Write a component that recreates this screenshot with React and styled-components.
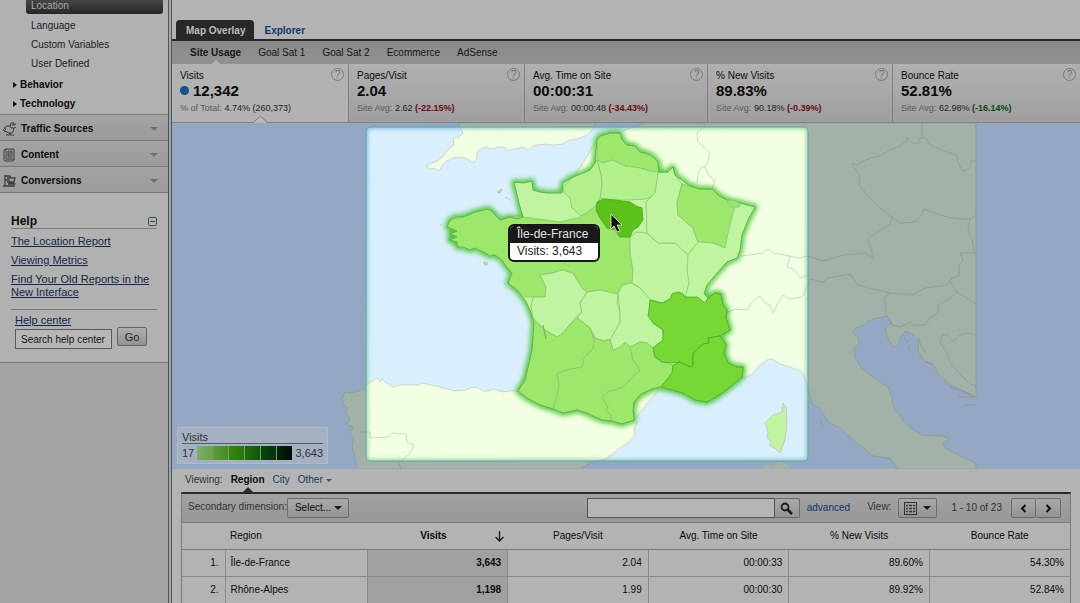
import React from "react";
import styled, { createGlobalStyle } from "styled-components";

const GlobalStyle = createGlobalStyle`
  *, *::before, *::after { box-sizing: border-box; }
  html, body { margin: 0; background: #b3b3b3; }
  body {
    font-family: "Liberation Sans", Arial, Helvetica, sans-serif;
    font-size: 10px;
    line-height: 12px;
    color: #0c0c0c;
  }
  button, input, select { font: inherit; color: inherit; margin: 0; }
`;

/* ---------- Frame ---------- */

const Page = styled.div`
  display: flex;
  min-height: 100vh;
`;

const Sidebar = styled.aside`
  flex: none;
  width: 172px;
  background: #a4a4a4;
  border-right: 4px double #4f5454;
`;

const Main = styled.main`
  flex: 1;
  min-width: 0;
  background: #b3b3b3;
`;

/* ---------- Sidebar ---------- */

const SubNav = styled.nav`
  background: #b1b1b1;
  padding-bottom: 1px;
`;

const ActiveItem = styled.a`
  display: block;
  height: 14px;
  margin: 0 5px 2px 26px;
  padding: 0 5px;
  border-radius: 0 0 3px 3px;
  background: linear-gradient(#474747, #262626);
  color: #a9a9a9;
  text-decoration: none;
`;

const SubItem = styled.a`
  display: block;
  height: 19px;
  padding: 4px 0 0 31px;
  color: #1c1c1c;
  text-decoration: none;
`;

const Groups = styled.div`
  padding-top: 2px;
`;

const GroupItem = styled.button`
  display: flex;
  align-items: center;
  gap: 3px;
  width: 100%;
  height: 19px;
  padding: 1px 0 0 13px;
  border: 0;
  background: none;
  font-weight: bold;
`;

const RightArrow = styled.span`
  border: 3px solid transparent;
  border-left: 4px solid #111;
  border-right: 0;
`;

const Section = styled.button`
  display: flex;
  align-items: center;
  width: 100%;
  height: 26px;
  padding: 2px 10px 0 3px;
  border: 0;
  border-top: 1px solid #7c7c7c;
  background: linear-gradient(#a4a4a4, #9b9b9b);
  font-weight: bold;
  text-align: left;
  svg { flex: none; margin-right: 4px; }
`;

const SectionName = styled.span`
  flex: 1;
`;

const Caret = styled.span`
  display: inline-block;
  border: ${(p) => p.$size || 4}px solid transparent;
  border-top-color: ${(p) => p.$color || "#6f6f6f"};
  border-bottom: 0;
`;

const HelpPanel = styled.section`
  padding: 21px 11px 13px;
  border-top: 1px solid #7c7c7c;
  border-bottom: 1px solid #787878;
  background: #b1b1b1;
`;

const HelpHead = styled.div`
  display: flex;
  align-items: center;
  justify-content: space-between;
  border-bottom: 1px solid #7d7d7d;
`;

const HelpTitle = styled.h2`
  margin: 0;
  font-size: 12px;
  line-height: 14px;
`;

const Collapse = styled.button`
  display: flex;
  padding: 0;
  border: 0;
  background: none;
`;

const HelpLinks = styled.div`
  display: flex;
  flex-direction: column;
  align-items: flex-start;
  gap: 6px;
  padding: 6px 0 10px;
  border-bottom: 1px solid #7d7d7d;
`;

const HelpLink = styled.a`
  color: #13284a;
  font-size: 11px;
  line-height: 13px;
  text-decoration: underline;
`;

const HelpSearch = styled.form`
  padding: 4px 4px 0;
`;

const HelpRow = styled.div`
  display: flex;
  align-items: flex-start;
  gap: 5px;
`;

const HelpInput = styled.input`
  width: 97px;
  height: 20px;
  margin-top: 2px;
  padding: 0 5px;
  border: 1px solid #5a5a5a;
  background: #b7b7b7;
  &::placeholder { color: #151515; opacity: 1; }
`;

const GoButton = styled.button`
  width: 30px;
  height: 19px;
  padding: 0;
  border: 1px solid #646464;
  border-radius: 2px;
  background: linear-gradient(#aeaeae, #929292);
  font-size: 11px;
  color: #222;
`;

/* ---------- Report header ---------- */

const Tabs = styled.nav`
  display: flex;
  padding: 20px 4px 0;
  border-bottom: 2px solid #282828;
`;

const Tab = styled.a`
  height: 19px;
  padding: 5px 9px 0 10px;
  border-radius: 4px 4px 0 0;
  background: ${(p) => (p.$active ? "#282828" : "transparent")};
  color: ${(p) => (p.$active ? "#bcbcbc" : "#10396b")};
  font-weight: bold;
  text-decoration: none;
`;

const SubTabs = styled.nav`
  display: flex;
  gap: 17px;
  height: 23px;
  padding: 6px 18px 0;
  background: linear-gradient(#8a8a8a, #919191);
`;

const SubTab = styled.a`
  position: relative;
  color: #161616;
  font-weight: ${(p) => (p.$active ? "bold" : "normal")};
  text-decoration: none;
  &::after {
    content: "";
    display: ${(p) => (p.$active ? "block" : "none")};
    position: absolute;
    bottom: 0;
    left: 50%;
    margin-left: -4px;
    border: 4px solid transparent;
    border-top: 0;
    border-bottom-color: #b3b3b3;
  }
`;

const Metrics = styled.section`
  display: grid;
  grid-template-columns: 176fr 176fr 183fr 185fr 188fr;
  height: 59px;
  border-bottom: 1px solid #858585;
`;

const Metric = styled.article`
  position: relative;
  padding: 6px 8px 0;
  border-left: 1px solid #7f7f7f;
  background: ${(p) => (p.$selected ? "#b2b2b2" : "linear-gradient(#b0b0b0, #9f9f9f)")};
  &:first-child { border-left: 0; }
`;

const MetricHead = styled.div`
  display: flex;
  justify-content: space-between;
  height: 12px;
`;

const HelpBadge = styled.button`
  width: 13px;
  height: 13px;
  margin: -2px -4px 0 0;
  padding: 0;
  border: 1px solid #7b7b7b;
  border-radius: 50%;
  background: none;
  color: #707070;
  line-height: 11px;
`;

const MetricValue = styled.div`
  display: flex;
  align-items: center;
  gap: 4px;
  font-size: 15px;
  line-height: 17px;
  font-weight: bold;
`;

const Dot = styled.span`
  width: 9px;
  height: 9px;
  border-radius: 50%;
  background: #0c558f;
`;

const MetricNote = styled.div`
  margin-top: 3px;
  font-size: 9px;
  line-height: 12px;
  color: #5c5c5c;
`;

const NoteValue = styled.span`
  color: #1e1e1e;
`;

const Change = styled.b`
  color: ${(p) => (p.$good ? "#0d4a12" : "#6c0b14")};
`;

const Notch = styled.svg`
  position: absolute;
  left: 50%;
  bottom: -1px;
  margin-left: -7px;
`;

/* ---------- Map ---------- */

const MapArea = styled.section`
  position: relative;
  height: 346px;
  background: #94a8c3;
`;

const MapSvg = styled.svg`
  display: block;
  width: 100%;
  height: 100%;
`;

const Tooltip = styled.div`
  position: absolute;
  left: 336px;
  top: 101px;
  width: 92px;
  border: 2px solid #171717;
  border-radius: 6px;
  background: #fff;
  overflow: hidden;
  color: #1b1b1b;
  font-size: 12px;
  line-height: 17px;
`;

const TooltipTitle = styled.div`
  padding: 0 7px;
  background: #191919;
  color: #e2e2e2;
`;

const TooltipBody = styled.div`
  padding: 0 7px;
`;

const Legend = styled.div`
  position: absolute;
  left: 5px;
  bottom: 5px;
  width: 151px;
  padding: 3px 4px 1px;
  border: 1px solid #b1bac8;
  background: #a5b0c2;
  color: #333;
  font-size: 11px;
`;

const LegendTitle = styled.div`
  border-bottom: 1px solid #555c66;
`;

const LegendScale = styled.div`
  display: flex;
  align-items: center;
  justify-content: space-between;
  height: 18px;
`;

const Swatches = styled.div`
  display: flex;
  gap: 1px;
  background: #7c9c70;
`;

const Swatch = styled.span`
  width: 15px;
  height: 14px;
  background: linear-gradient(90deg, ${(p) => p.$from}, ${(p) => p.$to});
`;

const OUTSIDE = {
  sea: "#94a8c3", land: "#a3b2a8", line: "#8c9a93", light: "#a3b2a8",
};
const INSIDE = {
  sea: "#daeffe", land: "#f3ffe2", line: "#c3cdb9",
  light: "#c0f4a0", soft: "#b2f08b", mid: "#9de86c", strong: "#76d735", top: "#5cc21a",
};

const MAINLAND =
  "M645 123L633 127L620 132L597 140L560 200L500 222L530 300L533 335L530 363L518 391L510 391L503 392L497 390L493 389L488 391L483 391L480 389L475 387L470 388L465 390L455 391L440 387L422 383L419 385L400 385L393 387L385 382L382 379L380 381L377 378L373 381L368 383L362 390L352 393L345 392L342 399L344 405L348 408L345 414L350 418L347 425L353 427L350 434L354 438L352 446L355 457L357 469L580 469L592 462L606 459L620 448L628 443L635 435L634 428L637 423L634 420L660 388L742 378L747 377L753 373L760 365L767 360L772 359L780 364L790 367L798 370L803 373L808 387L812 404L820 408L828 422L840 428L853 440L864 448L873 456L890 458L898 469H976V463L960 456L945 448L943 443L950 439L942 436L922 435L912 429L903 420L895 410L893 405L892 397L888 387L870 375L861 368L855 357L854 348L859 343L858 337L853 333L855 328L862 326L867 322L873 319L879 318L886 316L889 319L892 323L885 327L887 335L889 341L894 347L898 345L901 336L906 331L914 335L919 342L918 351L922 358L930 364L935 370L943 378L950 385L962 390L976 397V123Z";
const ENGLAND =
  "M458 123L460 128L463 133L458 138L453 138L454 145L447 151L443 156L438 161L432 163L426 166L430 169L434 168L439 171L442 166L447 161L453 158L460 157L467 159L470 161L474 163L477 158L477 152L481 149L485 147L493 149L499 147L504 147L508 151L514 149L523 147L528 150L533 146L537 145L547 144L553 145L563 144L567 141L577 139L587 135L593 129L596 123Z";
const FRANCE =
  "M597 140L600 136L610 133L620 133L622 140L627 145L635 146L640 152L646 153L652 156L658 162L659 172L668 172L673 167L675 175L682 180L690 186L700 189L712 189L718 195L727 200L740 203L755 207L748 220L742 235L740 250L737 258L727 262L718 272L707 285L704 294L708 298L715 293L721 294L723 305L727 310L726 318L730 330L720 336L726 345L724 353L728 363L737 367L743 367L742 377L730 387L718 396L707 402L695 400L683 393L672 390L660 387L652 389L640 395L634 402L633 410L634 420L622 424L612 421L602 420L595 417L587 413L577 410L563 413L553 409L540 405L527 398L518 391L525 380L529 363L532 350L533 337L534 322L530 310L525 300L517 290L508 283L512 273L505 265L502 260L495 255L490 256L485 253L475 248L470 250L463 247L457 247L457 242L449 240L457 237L450 234L457 231L447 227L450 220L456 217L463 217L475 212L488 209L492 211L495 215L500 220L510 217L517 219L523 217L520 207L517 195L514 182L523 183L532 181L533 190L540 192L547 193L562 193L563 183L573 177L590 170L595 163Z";

const REGIONS = [
  ["mid", "M597 140L600 136L610 133L620 133L622 140L627 145L635 146L640 152L652 156L658 162L659 172L650 171L640 168L625 166L612 160L603 163L597 160Z"],
  ["soft", "M597 160L603 163L612 160L625 166L640 168L650 171L659 172L658 185L655 195L646 199L628 200L615 200L600 198L602 185L601 175Z"],
  ["soft", "M563 187L573 177L590 170L597 160L601 175L602 185L600 198L596 206L589 211L581 216L572 208L570 198L564 193Z"],
  ["mid", "M523 217L510 217L500 220L492 211L488 209L475 212L463 217L450 220L447 227L457 231L450 234L457 237L449 240L457 242L457 247L470 250L475 248L485 253L495 255L505 265L512 273L508 283L517 290L525 297L545 297L546 287L540 275L553 273L562 270L573 273L582 288L587 292L600 290L618 295L622 285L632 283L633 270L630 253L630 237L620 237L600 218L597 205L589 211L581 217L560 222Z"],
  ["light", "M533 297L545 297L546 287L540 275L553 273L562 270L573 273L582 288L587 292L580 303L582 312L575 318L567 328L563 333L557 337L545 330L533 318L531 306Z"],
  ["light", "M587 292L600 290L618 294L617 303L620 312L620 322L613 338L604 341L595 338L590 328L577 318L582 312L580 303Z"],
  ["light", "M618 294L622 285L632 283L640 288L651 296L649 310L653 323L663 330L663 340L653 348L647 343L640 342L630 347L625 342L620 347L617 351L613 350L610 340L620 322L620 312Z"],
  ["light", "M630 237L637 232L647 233L658 243L675 243L688 255L687 270L689 283L685 297L678 292L670 299L662 303L651 300L640 288L632 283L633 270L630 253Z"],
  ["light", "M658 173L668 172L673 167L675 175L682 184L677 203L678 215L693 228L698 242L688 255L675 243L658 243L647 233L646 202L655 193Z"],
  ["mid", "M682 184L690 186L700 189L712 189L718 195L727 200L729 207L735 206L732 217L728 233L725 248L713 243L698 242L693 228L678 215L677 203Z"],
  ["mid", "M577 318L590 328L595 338L604 341L610 340L613 350L620 347L625 342L630 347L633 360L640 370L632 378L622 388L607 392L602 397L608 407L606 411L611 415L611 421L602 420L595 417L577 410L563 413L553 409L559 387L557 373L570 369L582 367L584 358L593 348L594 340Z"],
  ["mid", "M533 320L545 330L557 337L563 333L567 328L577 318L590 328L594 340L593 348L584 358L582 367L570 369L557 373L559 387L553 409L540 405L527 398L518 391L525 380L529 363L532 350Z"],
  ["mid", "M630 347L640 342L647 343L653 348L655 357L662 362L673 365L672 373L661 387L652 389L640 395L634 402L634 420L622 424L611 421L611 415L606 411L608 407L602 397L607 392L622 388L632 378L640 370L633 360Z"],
  ["strong", "M650 300L662 303L670 299L672 294L678 292L683 294L685 297L697 297L705 303L708 298L715 293L721 294L723 305L727 310L726 318L730 330L720 336L708 338L709 343L703 344L693 353L693 365L690 367L680 362L671 363L662 362L655 357L653 348L663 340L663 330L653 323L648 316L649 310Z"],
  ["strong", "M720 336L708 338L709 343L703 344L693 353L693 365L690 367L680 362L673 365L672 373L661 387L672 390L683 393L695 400L707 402L718 396L730 387L742 377L743 367L737 367L728 363L724 353L726 345Z"],
  ["top", "M597 202L603 199L615 200L630 202L636 206L642 208L643 220L638 227L633 230L630 237L620 237L615 230L607 228L600 218L596 210Z"],
];

const BORDERS = [
  "M705 123V127L697 132L698 142L704 147L710 153L708 161L705 167L709 176L715 180L712 189",
  "M697 183L698 173L702 167L705 167",
  "M740 256L750 255L763 253L768 249L773 253L790 256L787 267L795 270L800 278L808 275",
  "M790 256L798 258L808 256L823 261L843 255L865 253L874 259L872 252L868 238L880 231L890 224L892 217L900 223L915 222L922 214L924 209L935 213L947 217L960 219L970 219L976 215",
  "M728 312L735 309L747 310L753 301L760 296L765 303L770 305L773 313L778 303L783 295L790 299L802 297L808 285L810 279L823 282L828 278L850 274L858 285L872 289L890 293L912 295L925 288L947 285L952 278L959 276L959 264L963 260L960 253L976 253",
  "M892 217L880 208L867 195L859 184L860 177L852 164L857 165L870 158L880 156L890 150L898 147L906 142L907 137L911 142L917 144L920 138L926 138L930 145L943 151L954 154L957 157L958 163L963 171L970 168L971 161L976 161",
  "M922 123L922 138",
  "M970 219L968 230L973 243L974 253",
  "M890 293L883 298L886 304L885 312L890 321L892 325L900 327L910 322L913 325L925 325L930 318L938 313L938 305L948 300L957 292L950 282",
  "M957 292L967 298L976 304",
  "M976 335L967 333L958 336L953 341L948 335L942 335L940 342L947 353L950 362L958 372L967 381L976 387",
  "M360 432L370 432L370 438L388 437L392 433L406 434L407 442L414 445L410 453L399 463L401 469",
];

function MapShapes({ tone }) {
  return (
    <g strokeLinejoin="round">
      <rect x="172" y="123" width="908" height="346" fill={tone.sea} />
      <path d={MAINLAND} fill={tone.land} stroke={tone.line} strokeWidth="0.8" />
      <path d={ENGLAND} fill={tone.land} stroke={tone.line} strokeWidth="0.8" />
      <path d="M762 469L766 465L773 466L779 461L786 464L791 469Z" fill={tone.land} />
      <g fill="none" stroke={tone.line} strokeWidth="0.8">
        {BORDERS.map((d) => <path key={d} d={d} />)}
      </g>
      <path
        d="M783 403L786 407L787 423L785 440L780 453L775 448L770 446L771 442L767 437L768 432L765 423L773 415L782 412Z"
        fill={tone.light} stroke={tone.line}
      />
    </g>
  );
}

function FranceMap() {
  return (
    <MapSvg viewBox="172 123 908 346" preserveAspectRatio="xMinYMin slice" role="img" aria-label="Visits by region in France">
      <defs>
        <clipPath id="focus"><rect x="366" y="127" width="442" height="334" rx="4" /></clipPath>
        <linearGradient id="rim" x1="0" x2="1" y1="0" y2="1">
          <stop offset="0" stopColor="#5f9fdc" />
          <stop offset="0.4" stopColor="#67cb83" />
          <stop offset="1" stopColor="#62bda0" />
        </linearGradient>
        <filter id="glow" x="-10%" y="-10%" width="120%" height="120%"><feGaussianBlur stdDeviation="2.5" /></filter>
        <filter id="rimGlow" x="-10%" y="-10%" width="120%" height="120%"><feGaussianBlur stdDeviation="2" /></filter>
      </defs>
      <MapShapes tone={OUTSIDE} />
      <path d="M904 337L906 342L911 339M908 346L911 351M918 337L921 346L926 353M925 362L933 364L937 370M958 397H975M963 405H975M950 387L964 392L974 397M820 420L823 426M858 374L859 375" fill="none" stroke="#8c9a93" />
      <g clipPath="url(#focus)">
        <MapShapes tone={INSIDE} />
        <path d={FRANCE} fill="none" stroke="#3fc22f" strokeWidth="5" strokeLinejoin="round" filter="url(#glow)" />
        <path d={FRANCE} fill={INSIDE.light} />
        {REGIONS.map(([tone, d]) => (
          <path key={d} d={d} fill={INSIDE[tone]} stroke={tone === "strong" || tone === "top" ? "#48a81b" : "#86c76b"} strokeWidth="0.8" strokeLinejoin="round" />
        ))}
        <path d={FRANCE} fill="none" stroke="#5cb83f" strokeWidth="1" strokeLinejoin="round" />
        <path d="M543 325L546 339" fill="none" stroke="#5cb83f" />
        <path d="M727 200L735 201L741 204L739 207L732 207Z" fill={INSIDE.mid} stroke="#86c76b" strokeWidth="0.8" />
        <path d="M484 262L488 263L487 265L484 264ZM504 283L506 285M440 225H442M497 192L502 189L500 193ZM505 197L511 200" fill="#b9e59f" stroke="#9cc795" strokeWidth="0.8" />
        <rect x="365" y="126" width="444" height="336" rx="5" fill="none" stroke="url(#rim)" strokeWidth="5" opacity="0.8" filter="url(#rimGlow)" />
      </g>
      <rect x="366" y="127" width="442" height="334" rx="4" fill="none" stroke="#62a2b2" strokeWidth="1" />
      <path d="M611 214V229L614 226L617 232L620 231L617 225H622Z" fill="#111" stroke="#e7f5dd" strokeWidth="0.8" />
    </MapSvg>
  );
}

/* ---------- Data table ---------- */

const Viewing = styled.nav`
  display: flex;
  gap: 8px;
  height: 23px;
  padding: 5px 13px 0;
  color: #333;
`;

const ViewLink = styled.a`
  position: relative;
  color: ${(p) => (p.$active ? "#0c0c0c" : "#163c68")};
  font-weight: ${(p) => (p.$active ? "bold" : "normal")};
  text-decoration: none;
  ${Caret} { vertical-align: middle; }
  &::after {
    content: "";
    display: ${(p) => (p.$active ? "block" : "none")};
    position: absolute;
    bottom: 0;
    left: 50%;
    margin-left: -5px;
    border: 5px solid transparent;
    border-top: 0;
    border-bottom-color: #2a2a2a;
  }
`;

const Report = styled.section`
  margin: 0 9px;
  border: 1px solid #7b7b7b;
  border-top: 2px solid #2a2a2a;
  border-bottom: 0;
`;

const Toolbar = styled.div`
  display: flex;
  align-items: center;
  height: 28px;
  padding: 0 9px 0 6px;
  background: linear-gradient(#a3a3a3, #979797);
`;

const ToolLabel = styled.label`
  color: #333;
  line-height: 14px;
  padding-bottom: 2px;
`;

const SelectBox = styled.span`
  display: flex;
  align-items: center;
  position: relative;
  ${Caret} { position: absolute; right: 7px; pointer-events: none; }
`;

const Select = styled.select`
  appearance: none;
  width: 62px;
  height: 20px;
  padding: 0 7px;
  border: 1px solid #6c6c6c;
  border-radius: 2px;
  background: linear-gradient(#a9a9a9, #939393);
`;

const SearchBox = styled.form`
  display: flex;
  margin-left: auto;
`;

const SearchInput = styled.input`
  width: 188px;
  height: 20px;
  border: 1px solid #555;
  background: #b5b5b5;
`;

const ToolButton = styled.button`
  display: flex;
  align-items: center;
  justify-content: center;
  gap: 6px;
  width: ${(p) => p.$width}px;
  height: 20px;
  padding: 0;
  border: 1px solid #6c6c6c;
  border-left-width: ${(p) => (p.$joined ? 0 : 1)}px;
  border-radius: 2px;
  background: linear-gradient(#a9a9a9, #939393);
`;

const Advanced = styled.a`
  margin: 0 17px 0 7px;
  color: #0f3768;
  text-decoration: none;
`;

const ViewTools = styled.div`
  display: flex;
  align-items: center;
  gap: 7px;
`;

const Pager = styled.div`
  display: flex;
  align-items: center;
  margin-left: 14px;
  color: #303030;
`;

const PagerButtons = styled.div`
  display: flex;
  margin-left: 9px;
`;

const Table = styled.table`
  width: 100%;
  table-layout: fixed;
  border-collapse: collapse;
`;

const Col = styled.col`
  width: ${(p) => p.$width};
`;

const Th = styled.th`
  position: relative;
  height: 27px;
  padding: ${(p) => (p.$left ? "0 5px" : "0")};
  border-top: 1px solid #7b7b7b;
  border-bottom: 1px solid #7b7b7b;
  text-align: ${(p) => (p.$left ? "left" : "center")};
  font-weight: ${(p) => (p.$sorted ? "bold" : "normal")};
`;

const SortHead = styled.span`
  display: flex;
  align-items: center;
  justify-content: flex-end;
  gap: 47px;
  padding-right: 3px;
`;

const Td = styled.td`
  height: 27px;
  padding: 0 6px 0 5px;
  border-bottom: 1px solid #8a8a8a;
  border-left: 1px solid #8a8a8a;
  background: ${(p) => (p.$sorted ? "#a0a0a0" : "transparent")};
  font-weight: ${(p) => (p.$sorted ? "bold" : "normal")};
  text-align: ${(p) => (p.$left ? "left" : "right")};
  &:first-child { border-left: 0; }
`;

const ROWS = [
  ["1.", "Île-de-France", "3,643", "2.04", "00:00:33", "89.60%", "54.30%"],
  ["2.", "Rhône-Alpes", "1,198", "1.99", "00:00:30", "89.92%", "52.84%"],
];

const METRICS = [
  { name: "Visits", value: "12,342", label: "% of Total:", base: "4.74% (260,373)", selected: true },
  { name: "Pages/Visit", value: "2.04", label: "Site Avg:", base: "2.62", change: "(-22.15%)" },
  { name: "Avg. Time on Site", value: "00:00:31", label: "Site Avg:", base: "00:00:48", change: "(-34.43%)" },
  { name: "% New Visits", value: "89.83%", label: "Site Avg:", base: "90.18%", change: "(-0.39%)" },
  { name: "Bounce Rate", value: "52.81%", label: "Site Avg:", base: "62.98%", change: "(-16.14%)", good: true },
];

const SCALE = [
  ["#7fae6d", "#69a24e"], ["#5c9c3a", "#438f1f"], ["#37870f", "#247808"],
  ["#216d0b", "#11570b"], ["#08480c", "#04320b"], ["#052409", "#030c05"],
];

const line = { fill: "none", stroke: "#3f3f3f", strokeWidth: 1, strokeLinejoin: "round" };

const TrafficIcon = () => (
  <svg width="14" height="14" viewBox="0 0 14 14" {...line}>
    <path d="M1 6L4 4L7 4L8 6L11 6L10 10L7 12L4 10L1 9L3 7ZM7 4L8 1L11 1L9 4M10 3L13 2M11 6L13 5M1 9L0 7M3 13H11M7 10V13" />
  </svg>
);

const ContentIcon = () => (
  <svg width="14" height="14" viewBox="0 0 14 14" {...line}>
    <path d="M1 2L3 1H11V12L10 13H2L1 12ZM3 1V11H11M5 3H9V9H5ZM5 5H9M5 7H8" />
  </svg>
);

const FlagIcon = () => (
  <svg width="14" height="14" viewBox="0 0 14 14" {...line}>
    <path d="M2 1V12M0 12H7M2 2H7L8 4H12L11 8H7L6 6H2M4 4H12M4 8L12 10H5M6 12H12" strokeWidth="1.3" />
  </svg>
);

export default function App() {
  return (
    <>
      <GlobalStyle />
      <Page>
        <Sidebar>
          <SubNav aria-label="Visitors">
            <ActiveItem href="#location">Location</ActiveItem>
            <SubItem href="#language">Language</SubItem>
            <SubItem href="#variables">Custom Variables</SubItem>
            <SubItem href="#user">User Defined</SubItem>
            <Groups>
              <GroupItem><RightArrow />Behavior</GroupItem>
              <GroupItem><RightArrow />Technology</GroupItem>
            </Groups>
          </SubNav>
          <Section><TrafficIcon /><SectionName>Traffic Sources</SectionName><Caret /></Section>
          <Section><ContentIcon /><SectionName>Content</SectionName><Caret /></Section>
          <Section><FlagIcon /><SectionName>Conversions</SectionName><Caret /></Section>
          <HelpPanel>
            <HelpHead>
              <HelpTitle>Help</HelpTitle>
              <Collapse aria-label="Collapse help">
                <svg width="9" height="9" viewBox="0 0 9 9" fill="none" stroke="#35504c">
                  <rect x="0.5" y="0.5" width="8" height="8" rx="1" /><path d="M2 4.5H7" />
                </svg>
              </Collapse>
            </HelpHead>
            <HelpLinks>
              <HelpLink href="#report">The Location Report</HelpLink>
              <HelpLink href="#metrics">Viewing Metrics</HelpLink>
              <HelpLink href="#old">Find Your Old Reports in the New Interface</HelpLink>
            </HelpLinks>
            <HelpSearch>
              <HelpLink href="#help">Help center</HelpLink>
              <HelpRow>
                <HelpInput aria-label="Search help center" placeholder="Search help center" />
                <GoButton type="button">Go</GoButton>
              </HelpRow>
            </HelpSearch>
          </HelpPanel>
        </Sidebar>

        <Main>
          <Tabs>
            <Tab href="#map" $active>Map Overlay</Tab>
            <Tab href="#explorer">Explorer</Tab>
          </Tabs>
          <SubTabs>
            <SubTab href="#usage" $active>Site Usage</SubTab>
            <SubTab href="#goal1">Goal Sat 1</SubTab>
            <SubTab href="#goal2">Goal Sat 2</SubTab>
            <SubTab href="#ecommerce">Ecommerce</SubTab>
            <SubTab href="#adsense">AdSense</SubTab>
          </SubTabs>
          <Metrics>
            {METRICS.map((m) => (
              <Metric key={m.name} $selected={m.selected}>
                <MetricHead>{m.name}<HelpBadge aria-label={`About ${m.name}`}>?</HelpBadge></MetricHead>
                <MetricValue>{m.selected && <Dot />}{m.value}</MetricValue>
                <MetricNote>
                  {m.label} <NoteValue>{m.base}</NoteValue> {m.change && <Change $good={m.good}>{m.change}</Change>}
                </MetricNote>
                {m.selected && (
                  <Notch width="15" height="8" viewBox="0 0 15 8">
                    <path d="M0 8L7.5 1L15 8" fill="#b8b8b8" stroke="#777" />
                  </Notch>
                )}
              </Metric>
            ))}
          </Metrics>

          <MapArea>
            <FranceMap />
            <Tooltip role="tooltip">
              <TooltipTitle>Île-de-France</TooltipTitle>
              <TooltipBody>Visits: 3,643</TooltipBody>
            </Tooltip>
            <Legend>
              <LegendTitle>Visits</LegendTitle>
              <LegendScale>
                17
                <Swatches>{SCALE.map(([from, to]) => <Swatch key={from} $from={from} $to={to} />)}</Swatches>
                3,643
              </LegendScale>
            </Legend>
          </MapArea>

          <Viewing>
            Viewing:
            <ViewLink href="#region" $active>Region</ViewLink>
            <ViewLink href="#city">City</ViewLink>
            <ViewLink href="#other">Other <Caret $size={3} $color="#555" /></ViewLink>
          </Viewing>

          <Report>
            <Toolbar>
              <ToolLabel htmlFor="dimension">Secondary dimension:</ToolLabel>
              <SelectBox>
                <Select id="dimension"><option>Select...</option></Select>
                <Caret $color="#1c1c1c" />
              </SelectBox>
              <SearchBox>
                <SearchInput aria-label="Search the table" />
                <ToolButton type="button" aria-label="Search" $width={25} $joined>
                  <svg width="13" height="13" viewBox="0 0 13 13" fill="none" stroke="#1b1b1b">
                    <circle cx="5" cy="5" r="3.5" strokeWidth="1.8" /><path d="M7.5 7.5L12 12" strokeWidth="2.5" />
                  </svg>
                </ToolButton>
              </SearchBox>
              <Advanced href="#advanced">advanced</Advanced>
              <ViewTools>
                <ToolLabel as="span">View:</ToolLabel>
                <ToolButton aria-label="View as table" $width={39}>
                  <svg width="13" height="13" viewBox="0 0 13 13" fill="none" stroke="#333">
                    <rect x="0.5" y="0.5" width="12" height="12" />
                    <path d="M2 3.5H4M5 3.5H8M9 3.5H11M2 6.5H4M5 6.5H8M9 6.5H11M2 9.5H4M5 9.5H8M9 9.5H11" strokeWidth="1.6" />
                  </svg>
                  <Caret $size={4} $color="#1c1c1c" />
                </ToolButton>
              </ViewTools>
              <Pager>
                1 - 10 of 23
                <PagerButtons>
                  <ToolButton aria-label="Previous page" $width={25}>
                    <svg width="7" height="9" viewBox="0 0 7 9" fill="none" stroke="#111" strokeWidth="2"><path d="M5.5 1L2 4.5L5.5 8" /></svg>
                  </ToolButton>
                  <ToolButton aria-label="Next page" $width={25} $joined>
                    <svg width="7" height="9" viewBox="0 0 7 9" fill="none" stroke="#111" strokeWidth="2"><path d="M1.5 1L5 4.5L1.5 8" /></svg>
                  </ToolButton>
                </PagerButtons>
              </Pager>
            </Toolbar>
            <Table>
              <colgroup>
                <Col $width="43px" /><Col $width="16%" /><Col /><Col /><Col /><Col /><Col />
              </colgroup>
              <thead>
                <tr>
                  <Th />
                  <Th $left>Region</Th>
                  <Th $sorted>
                    <SortHead>
                      Visits
                      <svg width="11" height="11" viewBox="0 0 11 11" fill="none" stroke="#1b1b1b" strokeWidth="1.3"><path d="M5.5 0V10M1.5 6L5.5 10L9.5 6" /></svg>
                    </SortHead>
                  </Th>
                  <Th>Pages/Visit</Th>
                  <Th>Avg. Time on Site</Th>
                  <Th>% New Visits</Th>
                  <Th>Bounce Rate</Th>
                </tr>
              </thead>
              <tbody>
                {ROWS.map((row) => (
                  <tr key={row[0]}>
                    {row.map((cell, i) => <Td key={i} $left={i === 1} $sorted={i === 2}>{cell}</Td>)}
                  </tr>
                ))}
              </tbody>
            </Table>
          </Report>
        </Main>
      </Page>
    </>
  );
}
